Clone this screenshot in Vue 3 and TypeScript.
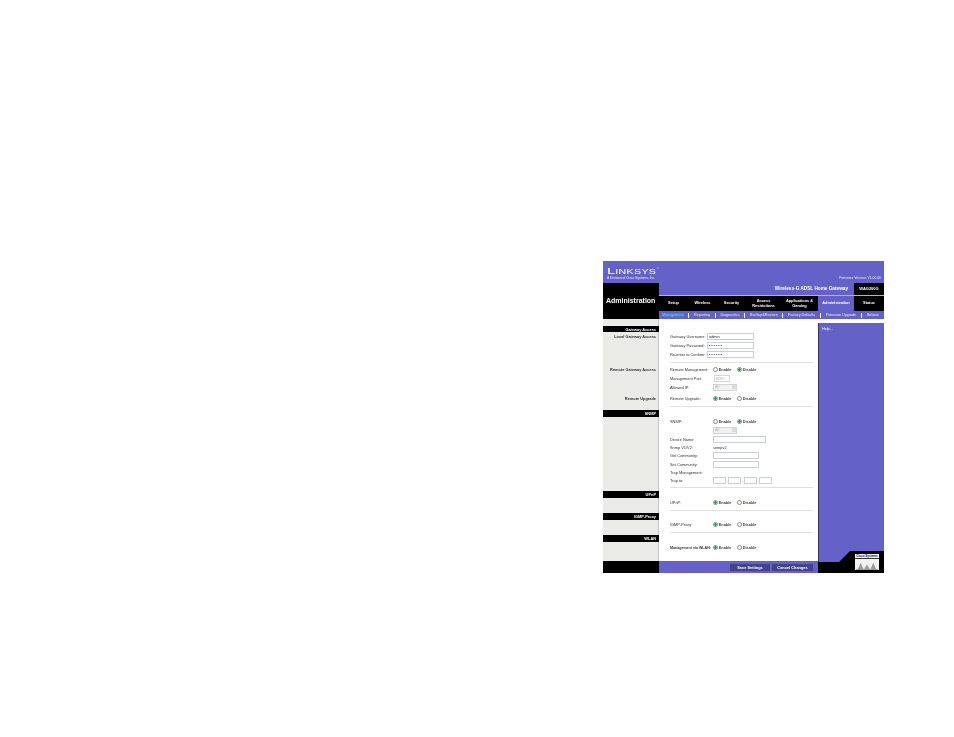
<script setup lang="ts">
type Radio = { on: 'Enable' | 'Disable' }
interface Row {
  kind: 'space' | 'head' | 'hr' | 'row'
  h: number
  left?: string
  label?: string
  wide?: boolean
  strong?: boolean
  control?: 'input' | 'password' | 'radio' | 'port' | 'select' | 'value' | 'trap' | 'none'
  value?: string
  w?: number
  radio?: Radio
}

const tabs = [
  { t: ['Setup'], w: 29 },
  { t: ['Wireless'], w: 29 },
  { t: ['Security'], w: 29 },
  { t: ['Access', 'Restrictions'], w: 35 },
  { t: ['Applications &', 'Gaming'], w: 37 },
  { t: ['Administration'], w: 36, active: true },
  { t: ['Status'], w: 30 },
]
const subs = ['Management', 'Reporting', 'Diagnostics', 'Backup&Restore', 'Factory Defaults', 'Firmware Upgrade', 'Reboot']

const rows: Row[] = [
  { kind: 'space', h: 7 },
  { kind: 'head', h: 6, left: 'Gateway Access' },
  { kind: 'row', h: 9, left: 'Local Gateway Access', label: 'Gateway Username:', wide: true, control: 'input', value: 'admin', w: 47 },
  { kind: 'row', h: 9, label: 'Gateway Password:', wide: true, control: 'password', value: '••••••', w: 47 },
  { kind: 'row', h: 9, label: 'Re-enter to Confirm:', wide: true, control: 'password', value: '••••••', w: 47 },
  { kind: 'hr', h: 6 },
  { kind: 'row', h: 9, left: 'Remote Gateway Access', label: 'Remote Management:', control: 'radio', radio: { on: 'Disable' } },
  { kind: 'row', h: 9, label: 'Management Port:', control: 'port', value: '8080', w: 16 },
  { kind: 'row', h: 8, label: 'Allowed IP:', control: 'select', value: 'All', w: 24 },
  { kind: 'space', h: 3 },
  { kind: 'row', h: 8, left: 'Remote Upgrade', label: 'Remote Upgrade:', control: 'radio', radio: { on: 'Enable' } },
  { kind: 'hr', h: 8 },
  { kind: 'head', h: 7, left: 'SNMP' },
  { kind: 'row', h: 8, label: 'SNMP:', control: 'radio', radio: { on: 'Disable' } },
  { kind: 'row', h: 10, control: 'select', value: 'All', w: 24 },
  { kind: 'row', h: 8, label: 'Device Name:', control: 'input', value: '', w: 53 },
  { kind: 'row', h: 8, label: 'Snmp V1/V2:', control: 'value', value: 'snmpv2' },
  { kind: 'row', h: 9, label: 'Get Community:', control: 'input', value: '', w: 46 },
  { kind: 'row', h: 8, label: 'Set Community:', control: 'input', value: '', w: 46 },
  { kind: 'row', h: 8, label: 'Trap Management:', control: 'none' },
  { kind: 'row', h: 8, label: 'Trap to:', control: 'trap' },
  { kind: 'hr', h: 7 },
  { kind: 'head', h: 7, left: 'UPnP' },
  { kind: 'row', h: 9, label: 'UPnP:', control: 'radio', radio: { on: 'Enable' } },
  { kind: 'hr', h: 6 },
  { kind: 'head', h: 7, left: 'IGMP-Proxy' },
  { kind: 'row', h: 9, label: 'IGMP-Proxy:', control: 'radio', radio: { on: 'Enable' } },
  { kind: 'hr', h: 6 },
  { kind: 'head', h: 7, left: 'WLAN' },
  { kind: 'row', h: 11, label: 'Management via WLAN:', strong: true, control: 'radio', radio: { on: 'Enable' } },
  { kind: 'space', h: 8 },
]
</script>

<template>
  <div class="page">
    <div class="sheet">
      <header class="brand">
        <div class="logo">
          <div class="wordmark">Linksys<sup>®</sup></div>
          <div class="division">A Division of Cisco Systems, Inc.</div>
        </div>
        <div class="firmware">Firmware Version: V1.00.00</div>
      </header>

      <div class="masthead">
        <div class="section-name">Administration</div>
        <div class="nav">
          <div class="title-row">
            <div class="product">Wireless-G ADSL Home Gateway</div>
            <div class="model">WAG200G</div>
          </div>
          <div class="rule"></div>
          <div class="tabs">
            <div
              v-for="tab in tabs"
              :key="tab.t[0]"
              class="tab"
              :class="{ active: tab.active }"
              :style="{ width: tab.w + 'px' }"
            >
              <span v-for="line in tab.t" :key="line">{{ line }}</span>
            </div>
          </div>
          <div class="subs">
            <template v-for="(s, i) in subs" :key="s">
              <span class="sub" :class="{ current: i === 0 }">{{ s }}</span>
              <i v-if="i < subs.length - 1" class="bar"></i>
            </template>
          </div>
        </div>
      </div>

      <div class="body">
        <div class="main">
          <div class="grid">
            <template v-for="(r, i) in rows" :key="i">
              <div
                class="left"
                :class="{ black: r.kind === 'head' }"
                :style="{ height: r.h + 'px' }"
              >{{ r.left }}</div>
              <div class="right" :style="{ height: r.h + 'px' }">
                <div v-if="r.kind === 'hr'" class="sep"></div>
                <div v-else-if="r.kind === 'row'" class="field">
                  <span class="label" :class="{ wide: r.wide, strong: r.strong }">{{ r.label }}</span>
                  <span
                    v-if="r.control === 'input' || r.control === 'password'"
                    class="box"
                    :class="{ dots: r.control === 'password' }"
                    :style="{ width: r.w + 'px' }"
                  >{{ r.value }}</span>
                  <span v-else-if="r.control === 'port'" class="box off" :style="{ width: r.w + 'px' }">{{ r.value }}</span>
                  <span v-else-if="r.control === 'select'" class="box off select" :style="{ width: r.w + 'px' }">
                    {{ r.value }}<b class="arrow"></b>
                  </span>
                  <span v-else-if="r.control === 'value'" class="value">{{ r.value }}</span>
                  <span v-else-if="r.control === 'trap'" class="trap">
                    <span class="box octet"></span>.<span class="box octet"></span>.<span class="box octet"></span>.<span class="box octet"></span>
                  </span>
                  <span v-else-if="r.radio" class="radios">
                    <span class="choice">
                      <i class="dot" :class="{ on: r.radio.on === 'Enable' }"></i>Enable
                    </span>
                    <span class="choice">
                      <i class="dot" :class="{ on: r.radio.on === 'Disable' }"></i>Disable
                    </span>
                  </span>
                </div>
              </div>
            </template>
          </div>
          <footer class="foot">
            <div class="foot-left"></div>
            <div class="foot-right">
              <span class="btn">Save Settings</span>
              <span class="btn">Cancel Changes</span>
            </div>
          </footer>
        </div>

        <aside class="side">
          <div class="help">Help...</div>
          <div class="corner">
            <div class="cisco">
              <div class="cisco-name">Cisco Systems</div>
              <svg class="bridge" viewBox="0 0 24 10" aria-hidden="true">
                <path d="M0 10h24V9h-2L19 2l-3 7h-1l-3-5-3 5H8L5 2 2 9H0z" fill="#9a9a9a" />
              </svg>
            </div>
          </div>
        </aside>
      </div>
    </div>
  </div>
</template>

<style scoped>
.page {
  width: 954px;
  height: 737px;
  padding: 261px 0 0 603px;
  box-sizing: border-box;
  background: #fff;
  font-family: "Liberation Sans", Arial, sans-serif;
  overflow: hidden;
}
.sheet {
  width: 281px;
  height: 312px;
  display: flex;
  flex-direction: column;
  filter: blur(0.4px);
}
.brand {
  height: 22px;
  background: #6462c8;
  display: flex;
  justify-content: space-between;
  color: #fff;
  flex: none;
}
.logo {
  padding: 5px 0 0 4px;
}
.wordmark {
  font-size: 9.5px;
  line-height: 10px;
  height: 10px;
  font-variant: small-caps;
  letter-spacing: 0.2px;
  transform-origin: left;
  transform: scaleX(1.52);
  white-space: nowrap;
}
.wordmark sup {
  font-size: 2.5px;
  vertical-align: top;
  line-height: 6px;
}
.division {
  font-size: 3.3px;
  line-height: 4px;
  color: #eeeefa;
  white-space: nowrap;
}
.firmware {
  font-size: 3.4px;
  color: #e4e4f6;
  align-self: flex-end;
  padding: 0 3px 2px 0;
  line-height: 6px;
}
.masthead {
  display: flex;
  height: 36px;
  flex: none;
}
.section-name {
  width: 56px;
  background: #000;
  color: #fff;
  font-size: 7px;
  font-weight: bold;
  line-height: 36px;
  padding-left: 3px;
  box-sizing: border-box;
  white-space: nowrap;
}
.nav {
  width: 225px;
  display: flex;
  flex-direction: column;
}
.title-row {
  height: 12px;
  display: flex;
  background: #6462c8;
}
.product {
  flex: 1;
  text-align: right;
  color: #fff;
  font-size: 4.7px;
  font-weight: bold;
  line-height: 12px;
  padding-right: 6px;
  white-space: nowrap;
}
.model {
  width: 30px;
  background: #000;
  color: #fff;
  font-size: 4px;
  font-weight: bold;
  line-height: 12px;
  text-align: center;
}
.rule {
  height: 1px;
  background: #b4b4c8;
}
.tabs {
  display: flex;
  height: 15px;
  background: #000;
}
.tab {
  display: flex;
  flex-direction: column;
  align-items: center;
  justify-content: center;
  color: #fff;
  font-size: 3.9px;
  line-height: 4.6px;
  font-weight: bold;
  white-space: nowrap;
}
.tab.active {
  background: #6462c8;
}
.subs {
  height: 8px;
  background: #6462c8;
  display: flex;
  align-items: center;
  padding-left: 3px;
  color: #ececfa;
  font-size: 3.7px;
  white-space: nowrap;
}
.sub.current {
  color: #7fd0ff;
  background: #4d74dc;
}
.bar {
  width: 1px;
  height: 5px;
  background: #fff;
  margin: 0 5px 0 4.5px;
  flex: none;
}
.body {
  display: flex;
  flex: 1;
  min-height: 0;
}
.main {
  width: 215px;
  display: flex;
  flex-direction: column;
}
.grid {
  display: grid;
  grid-template-columns: 56px 159px;
  flex: 1;
  align-content: start;
}
.left {
  background: #ebebe8;
  border-right: 1px solid #c4c4c4;
  box-sizing: border-box;
  font-size: 3.9px;
  font-weight: bold;
  color: #333;
  text-align: right;
  padding-right: 2px;
  display: flex;
  align-items: center;
  justify-content: flex-end;
  white-space: nowrap;
}
.left.black {
  background: #000;
  color: #fff;
  border-right-color: #000;
}
.right {
  padding-left: 11px;
  padding-right: 5px;
  background: #fff;
  display: flex;
  align-items: center;
  box-sizing: border-box;
}
.sep {
  width: 100%;
  height: 1px;
  background: #e2e2dc;
}
.field {
  display: flex;
  align-items: center;
  font-size: 3.9px;
  color: #333;
  white-space: nowrap;
}
.label {
  width: 43px;
  flex: none;
}
.label.wide {
  width: 37px;
}
.label.strong {
  font-weight: bold;
  font-size: 3.6px;
}
.box {
  height: 7px;
  box-sizing: border-box;
  border: 1px solid #c8d0d4;
  background: #fff;
  display: inline-flex;
  align-items: center;
  padding-left: 1px;
  line-height: 4px;
  color: #222;
  flex: none;
}
.dots {
  letter-spacing: 0.9px;
  font-size: 4px;
}
.off {
  color: #b4b4b4;
  border-color: #d4d4d4;
  margin-left: 1px;
}
.select {
  justify-content: space-between;
  padding-right: 0;
  background: #f1f1f1;
  margin-left: 0;
}
.arrow {
  width: 4px;
  height: 4px;
  background: #dcdcdc;
}
.value {
  color: #333;
}
.trap {
  display: flex;
  align-items: center;
  gap: 0.6px;
}
.octet {
  width: 13px;
  height: 7px;
}
.radios {
  display: flex;
}
.choice {
  width: 24px;
  display: flex;
  align-items: center;
  font-weight: bold;
  color: #444;
}
.dot {
  width: 5px;
  height: 5px;
  border-radius: 50%;
  border: 0.6px solid #7a947f;
  box-sizing: border-box;
  margin-right: 0.7px;
  background: #fff;
  flex: none;
}
.dot.on {
  background: radial-gradient(circle, #2f9a55 0 1.2px, #fff 1.4px);
}
.foot {
  display: flex;
  height: 12px;
  flex: none;
}
.foot-left {
  width: 56px;
  background: #000;
}
.foot-right {
  width: 159px;
  background: #6462c8;
  display: flex;
  justify-content: flex-end;
  align-items: center;
  gap: 2px;
  padding-right: 5px;
  box-sizing: border-box;
}
.btn {
  background: #42428e;
  color: #fff;
  font-size: 3.9px;
  font-weight: bold;
  height: 7px;
  line-height: 7px;
  width: 40px;
  text-align: center;
  white-space: nowrap;
}
.btn:last-child {
  width: 41px;
}
.side {
  width: 66px;
  display: flex;
  flex-direction: column;
  padding-top: 4px;
  background: #fff;
  box-sizing: border-box;
}
.help {
  flex: 1;
  background: #6462c8;
  color: #fff;
  font-size: 3.7px;
  padding: 4px 0 0 3px;
  box-sizing: border-box;
  border-left: 1px solid #34346e;
}
.corner {
  height: 22px;
  background: #6462c8;
  border-left: 1px solid #34346e;
  box-sizing: border-box;
  position: relative;
}
.corner::before {
  content: "";
  position: absolute;
  inset: 0 0 0 -1px;
  background: #000;
  clip-path: polygon(32px 0, 66px 0, 66px 22px, 0 22px, 0 11px, 21px 11px);
}
.cisco {
  position: absolute;
  left: 36px;
  top: 3px;
  width: 24px;
  height: 16px;
  background: #f2f2f2;
  box-sizing: border-box;
  display: flex;
  flex-direction: column;
  justify-content: space-between;
}
.cisco-name {
  font-size: 3px;
  line-height: 4px;
  color: #111;
  font-weight: bold;
  text-align: center;
  white-space: nowrap;
  border-bottom: 1px solid #333;
}
.bridge {
  width: 24px;
  height: 9px;
  display: block;
}
</style>
